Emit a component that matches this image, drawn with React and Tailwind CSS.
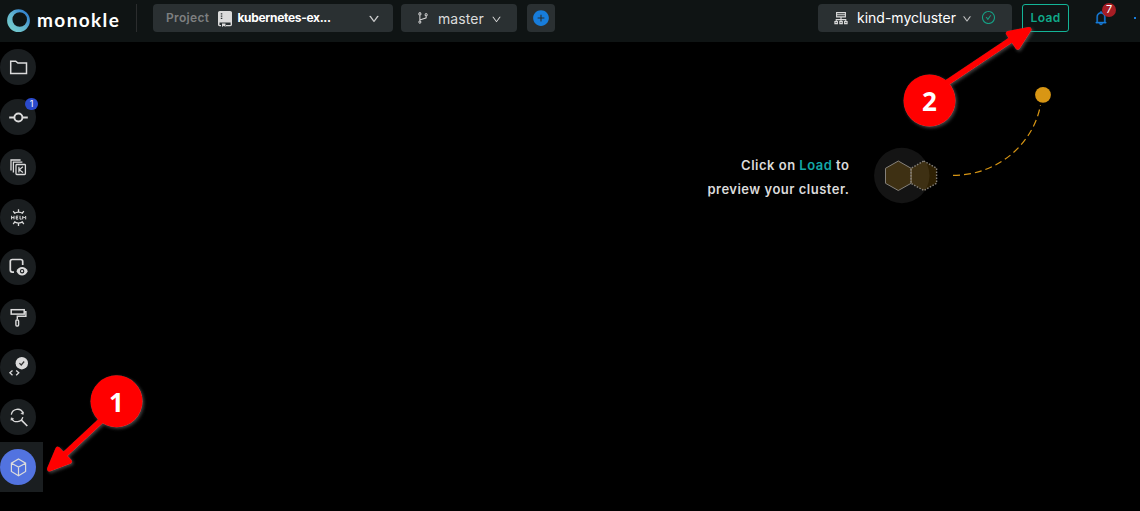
import React from "react";
import { AiOutlineDown, AiOutlineBranches, AiOutlineCheckCircle, AiOutlineBell, AiFillPlusCircle } from "react-icons/ai";

const Svg = ({ children }) => (
  <svg width="36" height="36" viewBox="0 0 36 36" fill="none" stroke="#dbdbdb" strokeWidth="1.3" className="block">
    {children}
  </svg>
);

const icons = [
  <Svg key="folder">
    <path d="M10.7 12.2h5l2.2 1.9h8.6v10.4H10.7z" strokeWidth="1.5" />
  </Svg>,
  <Svg key="commit">
    <circle cx="18.4" cy="18.5" r="4" strokeWidth="1.9" />
    <path d="M9.2 18.5h5.2M22.4 18.5h5.4" strokeWidth="1.8" />
  </Svg>,
  <Svg key="kustomize">
    <path d="M11 21.5v-10.5h9.6M13.4 23.5V13.2h9" strokeWidth="1.3" />
    <rect x="16" y="15.5" width="9.4" height="10" rx="0.8" strokeWidth="1.3" />
    <path d="M18.9 17.8v5.6M22.9 17.8l-3.6 2.9 3.7 2.7" strokeWidth="1.2" />
  </Svg>,
  <Svg key="helm">
    <path d="M14.2 14.6c2.3-2 6.3-2 8.6 0M14.2 22.6c2.3 2 6.3 2 8.6 0M18.5 13.2v-3M18.5 24v2.9M14.8 14.3l-1.6-2.1M22.2 14.3l1.6-2.1M14.8 22.9l-1.6 2.1M22.2 22.9l1.6 2.1" strokeWidth="1.3" />
    <path d="M11.6 16.8v3.6M14 16.8v3.6M11.6 18.6H14M18.2 17.1h-2v3h2M16.2 18.6h1.7M20 16.8v3.3h1.7M22.7 20.4v-3.1l1.5 1.7 1.5-1.7v3.1" strokeWidth="1" />
  </Svg>,
  <Svg key="preview">
    <path d="M14 23.1h-1.7a2 2 0 0 1-2-2v-8.6a2 2 0 0 1 2-2h8.4a2 2 0 0 1 2 2v3.5" strokeWidth="1.7" />
    <path d="M16.4 22.2c2.5-5.6 8.9-5.6 11.4 0-2.5 5.6-8.9 5.6-11.4 0z" fill="#dbdbdb" stroke="none" />
    <circle cx="22.1" cy="22.2" r="1.7" stroke="#1b1f21" strokeWidth="1.1" />
  </Svg>,
  <Svg key="roller">
    <rect x="11.2" y="10.7" width="13" height="4.4" strokeWidth="1.5" />
    <path d="M24.2 12.7h1.7v4.6h-8.6v3" strokeWidth="1.4" />
    <rect x="15.9" y="21" width="2.7" height="6" rx="0.9" strokeWidth="1.4" />
  </Svg>,
  <Svg key="validate">
    <circle cx="21.8" cy="14.2" r="6.2" fill="#dbdbdb" stroke="none" />
    <path d="m19.4 14.2 1.8 1.8 3-3.5" stroke="#333" strokeWidth="1.2" />
    <path d="m12.5 21.4-2.6 2.4 2.6 2.4M16.2 21.4l2.6 2.4-2.6 2.4" strokeWidth="1.3" />
  </Svg>,
  <Svg key="search">
    <path d="M11.3 15.6c1-6.1 9.3-7.3 11.6-1.9M22.8 18.1c-1.2 5.4-8.6 6.2-11.1 1.6" strokeWidth="1.3" />
    <path d="m23.6 12.9-.3 2.5-2.5-.9zM10.9 21.3l.3-2.6 2.4 1z" fill="#dbdbdb" strokeWidth="0.5" />
    <path d="m21.2 20.9 6.1 6.1" strokeWidth="1.6" />
  </Svg>,
  <Svg key="cube">
    <path d="m18.5 9.9 7.1 4.3v8.2l-7.1 4.3-7.1-4.3v-8.2zM11.4 14.2l7.1 3.9 7.1-3.9M18.5 18.1v8.4" strokeWidth="1.2" />
  </Svg>,
];

function Logo() {
  return (
    <div className="flex items-center w-[129px] shrink-0">
      <svg width="24" height="24" viewBox="0 0 24 24" className="shrink-0">
        <defs>
          <linearGradient id="ring" x1="0.1" y1="0.9" x2="0.9" y2="0.1">
            <stop offset="0" stopColor="#74cdcc" />
            <stop offset="0.5" stopColor="#62b3ce" />
            <stop offset="1" stopColor="#2b7bd0" />
          </linearGradient>
        </defs>
        <path fillRule="evenodd" fill="url(#ring)" d="M11.5 .2a11.4 11.4 0 1 1 0 22.8A11.4 11.4 0 0 1 11.5 .2zM12.7 3.2a7.3 7.3 0 1 0 0 14.6 7.3 7.3 0 0 0 0-14.6z" />
      </svg>
      <span className="ml-[6px] -mt-[2px] font-['Lato'] font-bold text-[19px] leading-6 tracking-[1.4px] text-white">monokle</span>
    </div>
  );
}

function Header() {
  return (
    <header className="flex items-start h-[42px] bg-[#0f1414] pl-[7px] pt-1 text-[#dbdbdb]">
      <div className="flex items-center h-7 pt-[5px]"><Logo /></div>
      <div className="w-px h-7 bg-[#2b2d2e]" />
      <div className="ml-4 flex items-center w-[240px] h-7 rounded bg-[#2a3032] pl-[13px] pr-[13px] shrink-0">
        <span className="text-[12px] font-semibold tracking-[0.35px] text-[#7d7f80]">Project</span>
        <svg width="14" height="16" viewBox="0 0 14 16" className="ml-[9px] mt-[1px] shrink-0">
          <path d="M1.8 0h10.4C13.2 0 14 .8 14 1.8v9.8H1.5V14H3v1.2H1.7C.7 15.2 0 14.5 0 13.5V1.8C0 .8.8 0 1.8 0zM14 11v2.5c0 1-.7 1.7-1.7 1.7H8V14h4.6v-2.5z" fill="#dbdbdb" />
          <path d="M2.8 2.2h1.5v1.2H2.8zM2.8 4.5h1.5v1.2H2.8zM2.8 6.8h1.5V8H2.8z" fill="#2a3032" />
          <path d="M4 12.6h3.5V16l-1.7-1.2L4 16z" fill="#dbdbdb" />
        </svg>
        <span className="ml-[5px] text-[12px] font-bold tracking-[-0.32px] text-white">kubernetes-ex...</span>
        <AiOutlineDown className="ml-auto mt-[1px]" size={12} strokeWidth={25} />
      </div>
      <div className="ml-2 flex items-center w-[116px] h-7 rounded bg-[#2a3032] pl-[15px] shrink-0">
        <AiOutlineBranches size={14} />
        <span className="ml-[8px] mt-[2px] text-[14px] leading-5 tracking-[0.1px]">master</span>
        <AiOutlineDown className="ml-[7px] mt-[3px]" size={11} />
      </div>
      <div className="ml-[10px] flex items-center justify-center w-7 h-7 rounded bg-[#2a3032] shrink-0">
        <AiFillPlusCircle size={18} color="#177ddc" />
      </div>
      <div className="ml-auto flex items-center w-[194px] h-7 rounded bg-[#2a3032] pl-[16px] shrink-0">
        <svg width="14" height="14" viewBox="0 0 14 14" fill="none" stroke="#dbdbdb" strokeWidth="1.1">
          <path d="M2.6 1.6h8.8v4.3H2.6zM2.6 3.8h8.8M7 5.9v3.2M2.2 10.5V8.6h9.6v1.9M7 8.6v2" />
          <path d="M.9 10.6h2.5v2H.9zM5.8 10.6h2.5v2H5.8zM10.6 10.6h2.5v2h-2.5z" />
        </svg>
        <span className="ml-[9px] text-[14px] leading-5 text-white">kind-mycluster</span>
        <AiOutlineDown className="ml-[6px] mt-[1px]" size={10} strokeWidth={25} />
        <AiOutlineCheckCircle className="ml-[9px] -mt-[2px]" size={15} color="#16a085" />
      </div>
      <div className="ml-[10px] w-[47px] h-7 rounded-[3px] border border-[#13b497] text-center text-[12px] font-semibold tracking-[0.35px] leading-[25px] text-[#0fa989] shrink-0">Load</div>
      <div className="relative ml-[24px] mt-[6px] w-4 h-4 shrink-0">
        <AiOutlineBell size={16} color="#177ddc" strokeWidth={25} />
        <span className="absolute left-[9px] -top-[7px] w-[14px] h-[14px] rounded-full bg-[#a61d24] text-center text-[11px] leading-[13px] text-white">7</span>
      </div>
      <div className="ml-[25px] mr-[4px] mt-[13px] w-[2px] h-[2px] bg-[#177ddc]" />
    </header>
  );
}

function Sidebar() {
  return (
    <nav className="flex flex-col w-[43px] shrink-0">
      {icons.map((icon, i) => (
        <div key={i} className={i === 8 ? "flex items-center h-[50px] bg-[#1a1e20]" : "flex items-center h-[50px]"}>
          <div className={i === 8 ? "relative w-9 h-9 rounded-full bg-[#5273e0]" : "relative w-9 h-9 rounded-full bg-[#1a1e20]"}>
            {icon}
            {i === 1 && (
              <span className="absolute left-[25px] -top-[1px] w-[13px] h-3 rounded-full bg-[#2b4acb] text-center text-[9px] leading-[11px] text-white">1</span>
            )}
          </div>
        </div>
      ))}
    </nav>
  );
}

function ClusterHint() {
  return (
    <div className="flex ml-auto mr-[86px] mt-[40px] h-[130px]">
      <p className="mt-[71px] mr-[21.5px] text-right text-[13px] font-semibold leading-6 tracking-[0.5px] text-[#dbdbdb]">
        Click on <span className="text-[#13a8a8]">Load</span> to<br />preview your cluster.
      </p>
      <svg width="183" height="130" viewBox="871 82 183 130" fill="none">
        <circle cx="901.8" cy="175.5" r="27.7" fill="#141414" />
        <path d="m898.3 161 12.8 7.3v15l-12.8 7.2-12.8-7.2v-15z" fill="#d89614" fillOpacity="0.22" stroke="#85817b" />
        <path d="m923.8 161 12.8 7.3v15l-12.8 7.2-12.8-7.2v-15z" fill="#d89614" fillOpacity="0.22" stroke="#85817b" strokeWidth="1.4" strokeDasharray="1.5 1.5" />
        <path d="M953 175.4C1001 175 1034 141 1040.5 105" stroke="#d89614" strokeWidth="1.2" strokeDasharray="7 4" />
        <circle cx="1043" cy="94.8" r="7.9" fill="#d89614" />
      </svg>
    </div>
  );
}

function Callouts() {
  return (
    <svg className="absolute left-0 top-0 pointer-events-none" width="1140" height="511" viewBox="0 0 1140 511">
      <defs>
        <filter id="shadow" x="-20%" y="-20%" width="140%" height="140%">
          <feDropShadow dx="1.5" dy="1.5" stdDeviation="1.5" floodColor="#777777" floodOpacity="0.55" />
        </filter>
      </defs>
      <g fill="#ff0000" stroke="#ff0000" strokeLinejoin="round" filter="url(#shadow)">
        <path d="M106 416 62 457" strokeWidth="6" />
        <path d="M49.5 469 57.8 449.2 69.5 461.5z" strokeWidth="5" />
        <circle cx="116.5" cy="401.3" r="26" stroke="none" />
      </g>
      <g fill="#ff0000" stroke="#ff0000" strokeLinejoin="round" filter="url(#shadow)">
        <path d="m945 84 68-45.5" strokeWidth="6" />
        <path d="m1029 29.5-11.3 17.7-9.3-13.8z" strokeWidth="5" />
        <circle cx="929.5" cy="100.5" r="26" stroke="none" />
      </g>
      <g fill="#ffffff" fontFamily="Open Sans, sans-serif" fontSize="26" fontWeight="700" textAnchor="middle">
        <text x="116.5" y="411.5">1</text>
        <text x="929.5" y="110.5">2</text>
      </g>
    </svg>
  );
}

export default function App() {
  return (
    <div className="relative w-[1140px] h-[511px] overflow-hidden bg-black font-['Inter',sans-serif]">
      <Header />
      <main className="flex">
        <Sidebar />
        <ClusterHint />
      </main>
      <Callouts />
    </div>
  );
}
